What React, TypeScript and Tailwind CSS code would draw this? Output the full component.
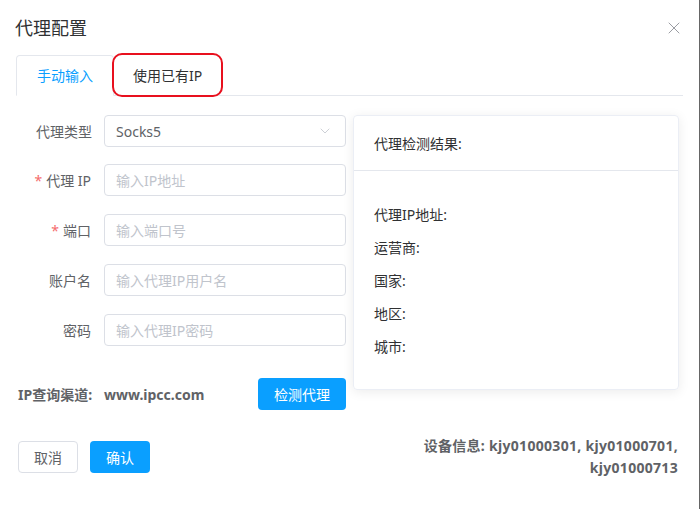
import { ChevronDown, X } from "lucide-react";

const font = { fontFamily: '"Noto Sans", "Noto Sans CJK SC", sans-serif' };

function Field({
  label,
  required,
  placeholder,
}: {
  label: string;
  required?: boolean;
  placeholder: string;
}) {
  return (
    <div className="flex h-[32px] items-center">
      <label className="w-[74px] pr-px text-right text-[14px] text-[#606266]">
        {required && <span className="mr-[4px] text-[#f56c6c]">*</span>}
        {label}
      </label>
      <div className="ml-[12px] flex h-[32px] w-[242px] items-center rounded-[4px] border border-[#dcdfe6] px-[11px] text-[14px] text-[#c0c4cc]">
        {placeholder}
      </div>
    </div>
  );
}

export default function App() {
  const results = ["代理IP地址:", "运营商:", "国家:", "地区:", "城市:"];

  return (
    <div
      className="flex h-[509px] w-[700px] flex-col border-r border-[#666] bg-white"
      style={font}
    >
      <div className="flex items-center justify-between pl-[15px] pr-[15px] pt-[16px]">
        <h1 className="text-[18px] leading-[24px] text-[#303133]">代理配置</h1>
        <X className="h-[20px] w-[20px] text-[#909399]" strokeWidth={1.1} />
      </div>

      <div className="relative ml-[16px] mt-[15px] flex w-[667px] border-b border-[#e4e7ed]">
        <div className="-mb-px flex h-[41px] items-center rounded-t-[4px] border border-b-white border-[#e4e7ed] px-[20px] text-[14px] text-[#0a9fff]">
          手动输入
        </div>
        <div className="flex h-[40px] items-center pl-[19px] pr-[20px] text-[14px] text-[#303133]">
          使用已有IP
        </div>
        <div className="pointer-events-none absolute left-[96px] top-[-2px] h-[44px] w-[111px] rounded-[10px] border-2 border-[#e8101e]" />
      </div>

      <div className="mt-[19px] flex items-start pl-[18px]">
        <div className="flex w-[328px] flex-col">
          <div className="flex h-[32px] items-center">
            <label className="w-[74px] text-right text-[14px] text-[#606266]">
              代理类型
            </label>
            <div className="ml-[12px] flex h-[32px] w-[242px] items-center justify-between rounded-[4px] border border-[#dcdfe6] pl-[11px] pr-[12px] text-[14px] text-[#606266]">
              Socks5
              <ChevronDown className="h-[16px] w-[16px] text-[#c0c4cc]" strokeWidth={1.2} />
            </div>
          </div>
          <div className="mt-[17px] flex flex-col gap-[18px]">
            <Field label="代理 IP" required placeholder="输入IP地址" />
            <Field label="端口" required placeholder="输入端口号" />
            <Field label="账户名" placeholder="输入代理IP用户名" />
            <Field label="密码" placeholder="输入代理IP密码" />
          </div>
          <div className="mt-[32px] flex h-[32px] items-center text-[14px] font-bold text-[#606266]">
            <span className="w-[86px]">IP查询渠道:</span>
            <span>www.ipcc.com</span>
            <button className="ml-auto h-[32px] w-[88px] rounded-[4px] bg-[#0a9fff] text-[14px] font-normal text-white">
              检测代理
            </button>
          </div>
        </div>

        <div className="ml-[7px] h-[275px] w-[326px] rounded-[4px] border border-[#ebeef5] shadow-[0_2px_12px_0_rgba(0,0,0,0.08)]">
          <div className="flex h-[55px] items-center border-b border-[#e4e7ed] px-[20px] text-[14px] text-[#303133]">
            代理检测结果:
          </div>
          <div className="flex flex-col gap-[13px] px-[20px] pt-[34px]">
            {results.map((r) => (
              <div key={r} className="text-[14px] leading-[20px] text-[#303133]">
                {r}
              </div>
            ))}
          </div>
        </div>
      </div>

      <div className="mt-[25px] flex items-center justify-between pl-[18px] pr-[21px]">
        <div className="flex gap-[12px]">
          <button className="h-[32px] w-[60px] rounded-[4px] border border-[#dcdfe6] text-[14px] text-[#606266]">
            取消
          </button>
          <button className="h-[32px] w-[60px] rounded-[4px] bg-[#0a9fff] text-[14px] text-white">
            确认
          </button>
        </div>
        <p className="text-right text-[14px] font-bold leading-[22px] tracking-[0.3px] text-[#606266]">
          设备信息: kjy01000301, kjy01000701,
          <br />
          kjy01000713
        </p>
      </div>
    </div>
  );
}
